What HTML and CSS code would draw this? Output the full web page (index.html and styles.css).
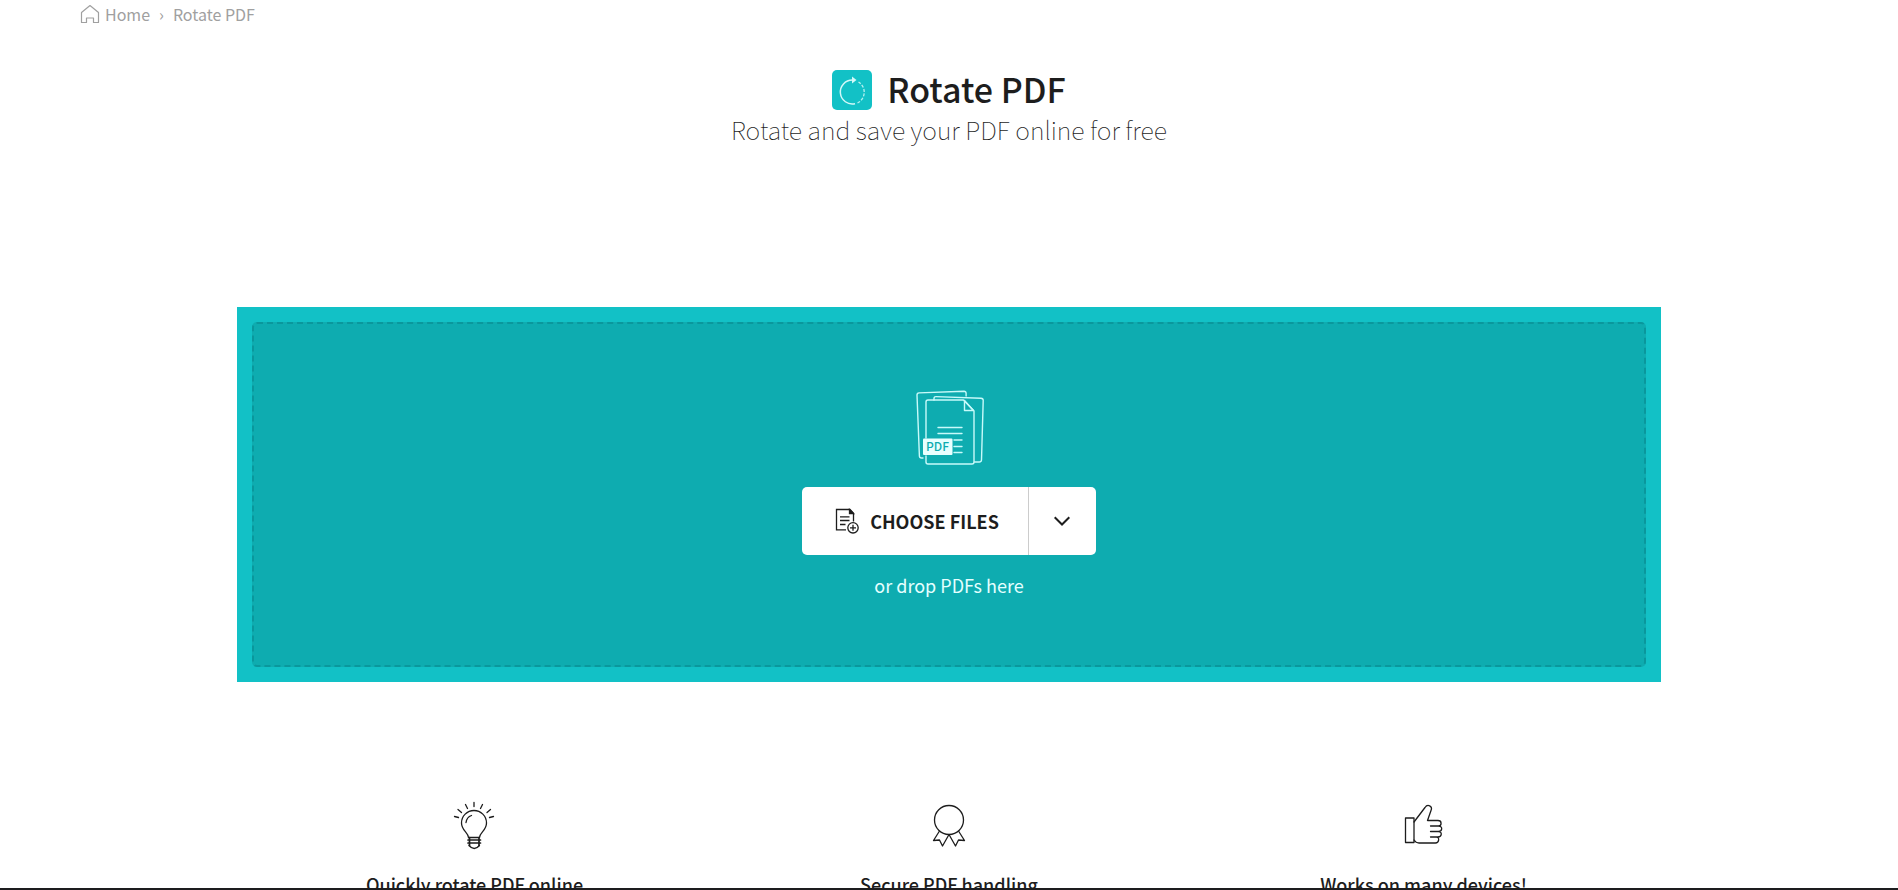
FILE: index.html
```html
<!DOCTYPE html>
<html lang="en">
<head>
<meta charset="utf-8">
<title>Rotate PDF</title>
<link rel="stylesheet" href="styles.css">
</head>
<body>
<div class="page">
  <nav class="breadcrumb" aria-label="Breadcrumb">
    <a class="crumb" href="#">
      <svg class="home-icon" viewBox="0 0 20 20" fill="none" stroke="currentColor" stroke-width="1.2" stroke-linejoin="round" aria-hidden="true"><path d="M1.5 8.5 10 1.5l8.500 7V18.500h-5v-4.500h-7v4.500h-5z"/></svg>
      <span>Home</span>
    </a>
    <span class="separator">›</span>
    <span>Rotate PDF</span>
  </nav>

  <header class="heading">
    <div class="title-row">
      <svg class="tool-icon" viewBox="0 0 40 40" fill="none" aria-hidden="true">
        <rect width="40" height="40" rx="5" fill="#12c1c6"/>
        <path d="M20.500 10A12 12 0 1 0 23 33.700" stroke="#d2f8f8" stroke-width="1.500"/>
        <path d="M25.500 33A12 12 0 0 0 26.500 12" stroke="#b4f0f0" stroke-width="1.300" stroke-dasharray="3 1.500"/>
        <path d="M20 6.500 24.500 10l-4.500 3.500z" fill="#d2f8f8"/>
      </svg>
      <h1 class="title">Rotate PDF</h1>
    </div>
    <p class="subtitle">Rotate and save your PDF online for free</p>
  </header>

  <main class="content">
    <section class="uploader">
      <div class="dropzone">
        <svg class="files-icon" viewBox="-2 0 70 76" fill="none" stroke="#c8fafa" stroke-width="1.400" stroke-linejoin="round" stroke-linecap="round" aria-hidden="true">
          <path d="M7 68H5.500Q3.500 68 3.400 66L1 5Q1 3 3 2.900L48 1.200Q50 1.200 50.100 3.200V6"/>
          <path d="M18 10V8.500Q18.100 6.500 20 6.600L65 8.200Q67.300 8.400 67.200 10.500L65.500 70Q65.300 72 63.300 72H58.500"/>
          <path d="M10 48V12Q10 10 12 10H47.500L58 21V72Q58 74 56 74H12Q10 74 10 72V66"/>
          <path d="M48.500 10.500V20.500H57.500z"/>
          <path d="M22 37.500H46M22 43.500H46M38 50H46M38 56.500H46M38 62.500H46"/>
          <rect x="7" y="48.500" width="29.500" height="16.500" rx="1" fill="#e8ffff" stroke="none"/>
          <text class="files-icon-label" x="21.500" y="61" text-anchor="middle">PDF</text>
        </svg>
        <div class="chooser">
          <button class="choose" type="button">
            <svg class="add-icon" viewBox="0 0 24 26" fill="none" stroke="currentColor" stroke-width="1.300" aria-hidden="true">
              <path d="M11 21.800H1.500V1.500H15L18.500 5.200V13.500"/>
              <path d="M14.500 1.500V5.500H18.500z" fill="currentColor"/>
              <path d="M5 8.800H14.500M5 12.500H14.500M5 16.500H10.500"/>
              <circle cx="18" cy="19.800" r="5.200"/>
              <path d="M15 19.800H21M18 16.800V22.800"/>
            </svg>
            <span>CHOOSE FILES</span>
          </button>
          <button class="more" type="button" aria-label="More sources">
            <svg class="chevron" viewBox="0 0 16 10" fill="none" stroke="currentColor" stroke-width="2" aria-hidden="true"><path d="M0.700 1.200 8 8.500 15.300 1.200"/></svg>
          </button>
        </div>
        <p class="drop-hint">or drop PDFs here</p>
      </div>
    </section>

    <section class="features">
      <article class="feature">
        <svg class="feature-icon" viewBox="1 0 50 50" fill="none" stroke="currentColor" stroke-width="1.300" stroke-linecap="round" aria-hidden="true">
          <path d="M19.500 37.500C19 32 12.500 30.500 12.500 23A12.300 12.300 0 0 1 37.500 23C37.500 30.500 31 32 30.500 37.500z"/>
          <path d="M17 22.500C17.500 19 19.500 16.500 22.500 15.500"/>
          <path d="M19 40H31.500M19 43H31.500M20.500 37.500V45.500M30 37.500V45.500" stroke-width="1.700"/>
          <path d="M20 45.500Q25.200 51.500 30.500 45.500"/>
          <path d="M25 2.500V6.500M16.500 4.500 18.500 8.500M33.500 4.500 31.500 8.500M9 9.500 12.500 12.500M41.500 9.500 38 12.500M5.500 16.500 9.500 17.500M44.500 16.500 40.500 17.500"/>
        </svg>
        <h2 class="feature-title">Quickly rotate PDF online</h2>
      </article>
      <article class="feature">
        <svg class="feature-icon" viewBox="0 0 50 50" fill="none" stroke="currentColor" stroke-width="1.300" stroke-linejoin="round" aria-hidden="true">
          <circle cx="25" cy="20" r="14.500"/>
          <path d="M15.500 31 9.500 40.500 15.500 40 18.500 46 25 34.500 31.500 46 34.500 40 40.500 40.500 34.500 31"/>
        </svg>
        <h2 class="feature-title">Secure PDF handling</h2>
      </article>
      <article class="feature">
        <svg class="feature-icon" viewBox="0 0 50 50" fill="none" stroke="currentColor" stroke-width="1.300" stroke-linejoin="round" stroke-linecap="round" aria-hidden="true">
          <rect x="6.500" y="18" width="8.500" height="24.500"/>
          <path d="M15 22 26 7.500C28.500 3.500 34 6 32 10.500L28.500 20.500H39C43 20.500 43 25.800 39.500 26H31.500H39.500C44 26 43.500 31.500 39.500 31.500H31.500H39.500C43.500 31.500 43 37 39 37H31.500H37.500C41 37.200 40 43 36.500 43H20Q17 43 15 40"/>
        </svg>
        <h2 class="feature-title">Works on many devices!</h2>
      </article>
    </section>
  </main>
</div>
<div class="bottom-bar"></div>
</body>
</html>
```
FILE: styles.css
```css
* {
  box-sizing: border-box;
}

body {
  margin: 0;
  color: #1d1d1d;
  background: #fff;
  font-family: "Noto Sans CJK SC", "Open Sans", sans-serif;
}

h1, h2, p {
  margin: 0;
}

.page {
  height: 100vh;
  overflow: hidden;
}

.breadcrumb {
  display: flex;
  align-items: center;
  gap: 9px;
  padding: 3px 80px 0;
  font-size: 16px;
  line-height: 22px;
  color: #a0a0a0;
}

.crumb {
  display: flex;
  align-items: center;
  gap: 5px;
  color: inherit;
  text-decoration: none;
}

.home-icon {
  width: 20px;
  height: 20px;
}

.heading {
  padding-top: 45px;
  text-align: center;
}

.title-row {
  display: flex;
  align-items: center;
  justify-content: center;
  gap: 15px;
}

.tool-icon {
  width: 40px;
  height: 40px;
}

.title {
  padding-bottom: 2px;
  font-size: 34px;
  font-weight: 500;
  line-height: 38px;
}

.subtitle {
  font-size: 25px;
  font-weight: 100;
  line-height: 38px;
}

.content {
  width: 75%;
  margin: 159px auto 0;
}

.uploader {
  padding: 15px;
  background: #12c1c6;
}

.dropzone {
  display: flex;
  flex-direction: column;
  align-items: center;
  padding: 66px 0;
  border: 2px dashed #0a979c;
  border-radius: 5px;
  background: #0eacb0;
}

.files-icon {
  width: 70px;
  height: 76px;
}

.files-icon-label {
  font-size: 12px;
  font-weight: 500;
  fill: #0eacb0;
  stroke: none;
}

.chooser {
  display: flex;
  height: 68px;
  margin-top: 21px;
  border-radius: 5px;
  background: #fff;
  overflow: hidden;
}

.choose,
.more {
  display: flex;
  align-items: center;
  border: 0;
  background: transparent;
  color: #1d1d1d;
  font-family: inherit;
}

.choose {
  gap: 11px;
  padding: 0 29px 0 33px;
  font-size: 18px;
  font-weight: 700;
}

.more {
  justify-content: center;
  width: 68px;
  padding: 0;
  border-left: 1px solid #ccc;
}

.add-icon {
  width: 24px;
  height: 26px;
}

.chevron {
  width: 16px;
  height: 10px;
}

.drop-hint {
  margin-top: 16px;
  font-size: 18px;
  font-weight: 400;
  line-height: 28px;
  color: #e4ffff;
}

.features {
  display: grid;
  grid-template-columns: repeat(3, 1fr);
  margin-top: 118px;
}

.feature {
  display: flex;
  flex-direction: column;
  align-items: center;
  gap: 20px;
}

.feature-icon {
  width: 50px;
  height: 50px;
}

.feature-title {
  font-size: 18px;
  font-weight: 500;
  line-height: 28px;
}

.bottom-bar {
  position: fixed;
  right: 0;
  bottom: 0;
  left: 0;
  height: 2px;
  background: #1d1d1f;
}
```
